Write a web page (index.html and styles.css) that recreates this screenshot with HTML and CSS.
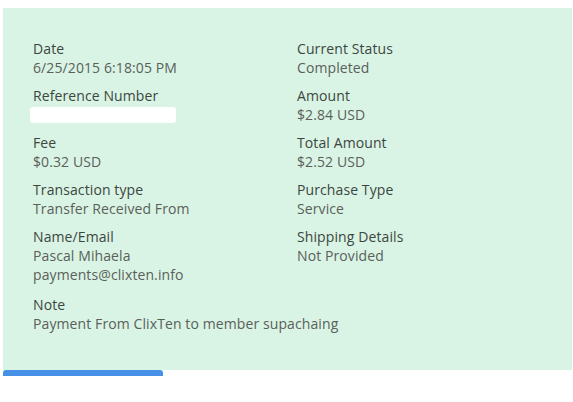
FILE: index.html
```html
<!DOCTYPE html>
<html>
<head>
<meta charset="utf-8">
<link rel="stylesheet" href="styles.css">
</head>
<body>
<div class="panel">
  <div class="grid">
    <div class="col">
      <div class="item"><div class="label">Date</div><div class="value">6/25/2015 6:18:05 PM</div></div>
      <div class="item"><div class="label">Reference Number</div><div class="value redact-row"><span class="redact"></span></div></div>
      <div class="item"><div class="label">Fee</div><div class="value">$0.32 USD</div></div>
      <div class="item"><div class="label">Transaction type</div><div class="value">Transfer Received From</div></div>
      <div class="item item-name"><div class="label">Name/Email</div><div class="value">Pascal Mihaela</div><div class="value">payments@clixten.info</div></div>
    </div>
    <div class="col">
      <div class="item"><div class="label">Current Status</div><div class="value">Completed</div></div>
      <div class="item"><div class="label">Amount</div><div class="value">$2.84 USD</div></div>
      <div class="item"><div class="label">Total Amount</div><div class="value">$2.52 USD</div></div>
      <div class="item"><div class="label">Purchase Type</div><div class="value">Service</div></div>
      <div class="item"><div class="label">Shipping Details</div><div class="value">Not Provided</div></div>
    </div>
  </div>
  <div class="item note"><div class="label">Note</div><div class="value">Payment From ClixTen to member supachaing</div></div>
</div>
<div class="tab"></div>
</body>
</html>
```
FILE: styles.css
```css
html, body { margin: 0; padding: 0; background: #fff; }
body {
  font-family: "Open Sans", "Liberation Sans", sans-serif;
  font-size: 14px;
  line-height: 19px;
  letter-spacing: 0.1px;
}
.panel {
  margin: 8px 1px 0 3px;
  background: #d9f4e4;
  padding: 31px 30px 37px;
}
.grid {
  display: grid;
  grid-template-columns: 264px 1fr;
}
.item { margin-bottom: 9px; }
.item-name { margin-top: 4px; }
.note { margin-bottom: 0; margin-top: 2px; }
.label { color: #3c4641; }
.value { color: #59605b; }
.redact-row { height: 19px; padding-top: 2px; box-sizing: border-box; }
.redact {
  display: block;
  width: 146px;
  height: 16px;
  margin-left: -3px;
  background: #fff;
  border-radius: 3px;
}
.tab {
  margin-left: 3px;
  width: 160px;
  height: 6px;
  background: #4690e6;
  border-radius: 3px 3px 0 0;
}
```
